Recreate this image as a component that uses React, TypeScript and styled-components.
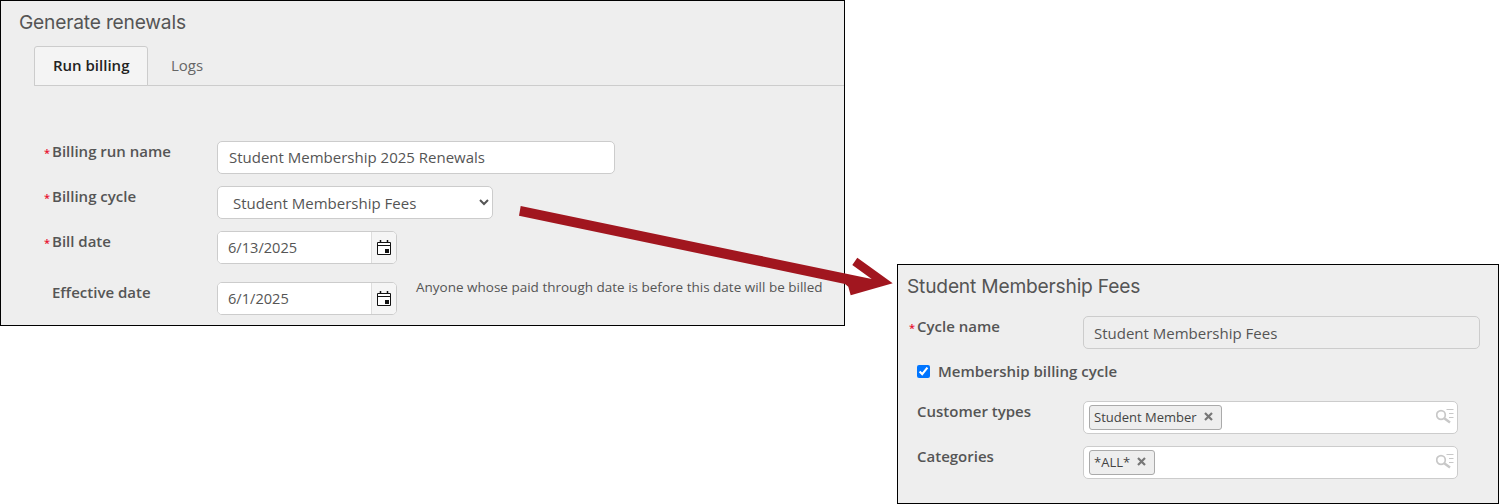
import React from "react";
import styled, { createGlobalStyle } from "styled-components";

const Global = createGlobalStyle`
  html, body { margin: 0; padding: 0; background: #fff; }
  body { font-family: "Open Sans", "Liberation Sans", sans-serif; font-size: 15px; color: #555; }
`;

const Canvas = styled.div`
  position: relative;
  width: 1499px;
  height: 504px;
  overflow: hidden;
  display: flex;
  align-items: flex-start;
  gap: 52px;
`;

const Panel = styled.section<{ $w: number; $h: number; $top: number; $pad: string }>`
  box-sizing: border-box;
  width: ${(p) => p.$w}px;
  height: ${(p) => p.$h}px;
  margin-top: ${(p) => p.$top}px;
  padding: ${(p) => p.$pad};
  background: #eee;
  border: 1px solid #000;
  flex: none;
`;

const Title = styled.h1`
  margin: 0;
  font-family: Inter, "Open Sans", sans-serif;
  font-weight: 400;
  font-size: 19.2px;
  line-height: 24px;
  letter-spacing: -0.2px;
  color: #555;
`;

const TabBar = styled.div`
  display: flex;
  margin: 12px 0 0 15px;
  height: 40px;
  box-sizing: border-box;
  border-bottom: 1px solid #ccc;
`;

const Tab = styled.div<{ $active?: boolean }>`
  box-sizing: border-box;
  height: 40px;
  padding: 0 18px;
  line-height: 36px;
  white-space: nowrap;
  color: ${(p) => (p.$active ? "#222" : "#666")};
  font-weight: ${(p) => (p.$active ? 600 : 400)};
  background: ${(p) => (p.$active ? "#f4f4f4" : "transparent")};
  border: 1px solid ${(p) => (p.$active ? "#ccc" : "transparent")};
  border-radius: 3px 3px 0 0;
  width: ${(p) => (p.$active ? "114px" : "auto")};
  margin-right: ${(p) => (p.$active ? "4px" : "0")};
`;

const Form = styled.div<{ $top: number; $gap: number }>`
  display: flex;
  flex-direction: column;
  gap: ${(p) => p.$gap}px;
  margin-top: ${(p) => p.$top}px;
`;

const Row = styled.div<{ $left: number; $extra?: number }>`
  display: grid;
  grid-template-columns: ${(p) => p.$left}px auto auto;
  justify-content: start;
  align-items: start;
  min-height: 33px;
  margin-top: ${(p) => p.$extra ?? 0}px;
`;

const Label = styled.label<{ $indent: number }>`
  position: relative;
  display: block;
  margin: 0 0 0 ${(p) => p.$indent}px;
  font-weight: 600;
  font-size: 15px;
  line-height: 21px;
  color: #555;
`;

const Star = styled.span`
  position: absolute;
  left: -8px;
  top: 1px;
  color: #e8112d;
  font-weight: 600;
  font-size: 11px;
`;

const fieldBase = `
  box-sizing: border-box;
  height: 33px;
  border: 1px solid #ccc;
  border-radius: 5px;
  background: #fff;
  font-family: "Open Sans", "Liberation Sans", sans-serif;
  font-size: 15px;
  color: #555;
  outline: none;
`;

const TextInput = styled.input<{ $w: number; $disabled?: boolean }>`
  ${fieldBase}
  width: ${(p) => p.$w}px;
  padding: ${(p) => (p.$disabled ? "0 10px" : "0 10px 2px 11px")};
  background: ${(p) => (p.$disabled ? "#eee" : "#fff")};
`;

const Select = styled.select`
  ${fieldBase}
  width: 276px;
  padding: 0 11px;
`;

const DateBox = styled.div`
  ${fieldBase}
  width: 180px;
  display: flex;
  overflow: hidden;
`;

const DateInput = styled.input`
  flex: 1;
  min-width: 0;
  border: 0;
  outline: none;
  padding: 0 10px 2px;
  font: inherit;
  font-size: 14.6px;
  color: #555;
  background: #fff;
`;

const CalendarBtn = styled.div`
  flex: none;
  width: 24px;
  border-left: 1px solid #ddd;
  background: #f5f5f5;
  display: flex;
  align-items: center;
  justify-content: center;
`;

const Help = styled.div`
  margin: -5px 0 0 19px;
  font-size: 13.5px;
  line-height: 20px;
  color: #555;
  white-space: nowrap;
`;

const CheckRow = styled.label`
  display: flex;
  align-items: center;
  gap: 8px;
  height: 14px;
  margin: 3px 0 0 10px;
  font-weight: 600;
  color: #555;
`;

const Check = styled.input`
  width: 13px;
  height: 13px;
  margin: 0;
  accent-color: #0075ff;
`;

const Multi = styled.div`
  box-sizing: border-box;
  width: 375px;
  height: 33px;
  background: #fff;
  border: 1px solid #ccc;
  border-radius: 5px;
  padding: 3px 0 0 5px;
  display: flex;
  align-items: flex-start;
  justify-content: space-between;
`;

const Chip = styled.span`
  box-sizing: border-box;
  display: inline-flex;
  align-items: center;
  gap: 7px;
  height: 25px;
  padding: 0 8px 2px 4px;
  background: #eee;
  border: 1px solid #aaa;
  border-radius: 3px;
  font-size: 13px;
  color: #444;
`;

const LookupIcon = styled.svg`
  margin: 3px 3px 0 0;
  flex: none;
`;

const ChipX = () => (
  <svg width="9" height="9" viewBox="0 0 9 9" aria-hidden="true">
    <path d="M1 1l7 7M8 1L1 8" stroke="#777" strokeWidth="2.2" />
  </svg>
);

const Calendar = () => (
  <svg width="14" height="15" viewBox="0 0 14 15" aria-hidden="true">
    <path d="M.5 2.5h13v12H.5z" fill="#fff" stroke="#111" />
    <path d="M.5 5.5h13" stroke="#111" />
    <path d="M3.5 0v3M10.5 0v3" stroke="#111" strokeWidth="1.5" />
    <rect x="8" y="9" width="4" height="4" fill="#111" />
  </svg>
);

const Lookup = () => (
  <LookupIcon width="18" height="17" viewBox="0 0 18 17" fill="none" stroke="#c8c8c8" aria-hidden="true">
    <circle cx="5" cy="7" r="4.3" strokeWidth="1.7" />
    <path d="M8.2 10.2L14 14.5" strokeWidth="2.4" />
    <path d="M10.5 1.5h7M13 5.5h4.5M13 9.5h4.5" strokeWidth="1" />
  </LookupIcon>
);

const ArrowLayer = styled.svg`
  position: absolute;
  left: 0;
  top: 0;
  pointer-events: none;
`;

const Arrow = () => (
  <ArrowLayer width="1499" height="504" viewBox="0 0 1499 504">
    <path
      d="M520.7 206L871.7 279L852.3 265L857.3 257.7L892.7 283.3L850.7 295.3L848.3 286.7L845 284L519 215.7Z"
      fill="#a1161f"
    />
  </ArrowLayer>
);

export default function App() {
  return (
    <Canvas>
      <Global />
      <Panel $w={845} $h={326} $top={0} $pad="9px 0 0 18px">
        <Title>Generate renewals</Title>
        <TabBar>
          <Tab $active>Run billing</Tab>
          <Tab>Logs</Tab>
        </TabBar>
        <Form $top={55} $gap={12}>
          <Row $left={198}>
            <Label $indent={33}>
              <Star>*</Star>Billing run name
            </Label>
            <TextInput $w={398} defaultValue="Student Membership 2025 Renewals" />
          </Row>
          <Row $left={198}>
            <Label $indent={33}>
              <Star>*</Star>Billing cycle
            </Label>
            <Select defaultValue="fees">
              <option value="fees">Student Membership Fees</option>
            </Select>
          </Row>
          <Row $left={198}>
            <Label $indent={33}>
              <Star>*</Star>Bill date
            </Label>
            <DateBox>
              <DateInput defaultValue="6/13/2025" />
              <CalendarBtn>
                <Calendar />
              </CalendarBtn>
            </DateBox>
          </Row>
          <Row $left={198} $extra={6}>
            <Label $indent={33}>Effective date</Label>
            <DateBox>
              <DateInput defaultValue="6/1/2025" />
              <CalendarBtn>
                <Calendar />
              </CalendarBtn>
            </DateBox>
            <Help>Anyone whose paid through date is before this date will be billed</Help>
          </Row>
        </Form>
      </Panel>
      <Panel $w={602} $h={240} $top={264} $pad="9px 0 0 9px">
        <Title>Student Membership Fees</Title>
        <Form $top={18} $gap={12}>
          <Row $left={176}>
            <Label $indent={10}>
              <Star>*</Star>Cycle name
            </Label>
            <TextInput $w={397} $disabled defaultValue="Student Membership Fees" />
          </Row>
          <CheckRow>
            <Check type="checkbox" defaultChecked />
            Membership billing cycle
          </CheckRow>
          <Row $left={176} $extra={11}>
            <Label $indent={10}>Customer types</Label>
            <Multi>
              <Chip>
                Student Member <ChipX />
              </Chip>
              <Lookup />
            </Multi>
          </Row>
          <Row $left={176}>
            <Label $indent={10}>Categories</Label>
            <Multi>
              <Chip>
                *ALL* <ChipX />
              </Chip>
              <Lookup />
            </Multi>
          </Row>
        </Form>
      </Panel>
      <Arrow />
    </Canvas>
  );
}
